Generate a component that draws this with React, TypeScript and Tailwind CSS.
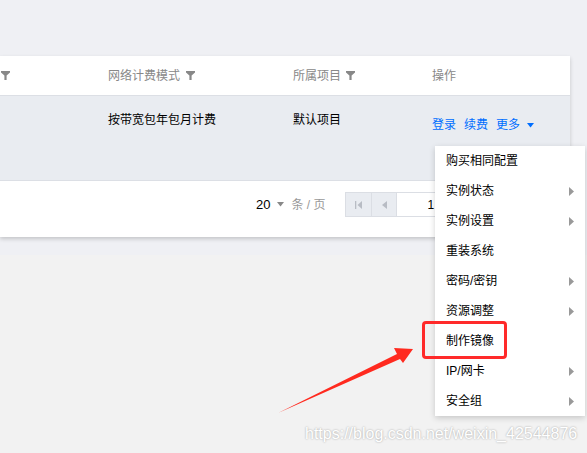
import React from 'react';

const menuItems = [
  { label: '购买相同配置', sub: false },
  { label: '实例状态', sub: true },
  { label: '实例设置', sub: true },
  { label: '重装系统', sub: false },
  { label: '密码/密钥', sub: true },
  { label: '资源调整', sub: true },
  { label: '制作镜像', sub: false },
  { label: 'IP/网卡', sub: true },
  { label: '安全组', sub: true },
];

function Funnel({ className = '' }: { className?: string }) {
  return (
    <svg width="9" height="9" viewBox="0 0 9 9" className={className}>
      <path d="M0 0H9V1.6L5.6 4.6V9H3.4V4.6L0 1.6Z" fill="#888" />
    </svg>
  );
}

function CaretDown({ color }: { color: string }) {
  return (
    <svg width="7" height="5" viewBox="0 0 7 5">
      <path d="M0 0H7L3.5 4.5Z" fill={color} />
    </svg>
  );
}

function CaretRight() {
  return (
    <svg width="5" height="9" viewBox="0 0 5 9">
      <path d="M0 0L5 4.5L0 9Z" fill="#999" />
    </svg>
  );
}

export default function App() {
  return (
    <div className="relative w-[587px] h-[453px] overflow-hidden bg-[#f2f2f2] font-['Liberation_Sans','Noto_Sans_CJK_SC',sans-serif] text-[12px] leading-[16px] text-[#000]">
      {/* table area */}
      <div className="bg-[#eff0f4] pt-[56px] pb-[18px]">
        <div className="w-[570px] bg-white shadow-[0_2px_4px_rgba(0,0,0,0.18)]">
          {/* header */}
          <div className="flex h-[40px] items-center border-b border-[#dcdfe5] text-[#888]">
            <div className="w-[108px] pl-px">
              <Funnel />
            </div>
            <div className="flex w-[185px] items-center gap-[6px]">
              <span>网络计费模式</span>
              <Funnel />
            </div>
            <div className="flex w-[139px] items-center gap-[5px]">
              <span>所属项目</span>
              <Funnel />
            </div>
            <div>操作</div>
          </div>

          {/* body row */}
          <div className="flex h-[85px] border-b border-[#dcdfe5] bg-[#e9ecf1]">
            <div className="w-[108px]" />
            <div className="w-[185px] pt-[16px]">按带宽包年包月计费</div>
            <div className="w-[139px] pt-[16px]">默认项目</div>
            <div className="flex items-center gap-[8px] self-start pt-[21px] text-[#006eff]">
              <span>登录</span>
              <span>续费</span>
              <span className="flex items-center gap-[7px]">
                更多
                <CaretDown color="#006eff" />
              </span>
            </div>
          </div>

          {/* pagination */}
          <div className="flex h-[56px] items-start pl-[256px] pt-[11px]">
            <div className="flex h-[25px] items-center">
              <span className="text-[13px] text-[#000]">20</span>
              <span className="ml-[7px]">
                <CaretDown color="#888" />
              </span>
              <span className="ml-[7px] text-[#999]">条 / 页</span>
            </div>
            <div className="ml-[20px] flex h-[25px] border border-[#dbdee4]">
              <div className="flex w-[25px] items-center justify-center bg-[#e9ecf1]">
                <svg width="7" height="8" viewBox="0 0 7 8">
                  <rect x="0" y="0" width="1.3" height="8" fill="#b8bcc4" />
                  <path d="M7 0V8L2.5 4Z" fill="#b8bcc4" />
                </svg>
              </div>
              <div className="flex w-[25px] items-center justify-center border-l border-[#dbdee4] bg-[#e9ecf1]">
                <svg width="5" height="8" viewBox="0 0 5 8">
                  <path d="M5 0V8L0 4Z" fill="#b8bcc4" />
                </svg>
              </div>
              <div className="flex w-[90px] items-center border-l border-[#dbdee4] pl-[30px] text-[#000]">1</div>
            </div>
          </div>
        </div>
      </div>

      {/* dropdown menu */}
      <div className="absolute left-[435px] top-[146px] w-[150px] bg-white shadow-[0_2px_6px_rgba(0,0,0,0.18)]">
        {menuItems.map((item) => (
          <div key={item.label} className="flex h-[30px] items-center justify-between pl-[11px] pr-[11px]">
            <span>{item.label}</span>
            {item.sub && <CaretRight />}
          </div>
        ))}
      </div>

      {/* highlight box */}
      <div className="absolute left-[422px] top-[321px] h-[38px] w-[85px] rounded-[4px] border-[3px] border-[#ff2a2a]" />

      {/* annotation arrow */}
      <svg className="pointer-events-none absolute left-0 top-0" width="587" height="453" viewBox="0 0 587 453">
        <polygon points="278,413 397,354 394,348 413,349 403,363 400,359" fill="#ff2a1f" />
      </svg>

      {/* watermark */}
      <div className="absolute left-[305px] top-[424px] whitespace-nowrap font-['Liberation_Sans',sans-serif] text-[16px] leading-[20px] text-white [text-shadow:0_0_2px_#9a9a9a]">
        https://blog.csdn.net/weixin_42544876
      </div>
    </div>
  );
}
